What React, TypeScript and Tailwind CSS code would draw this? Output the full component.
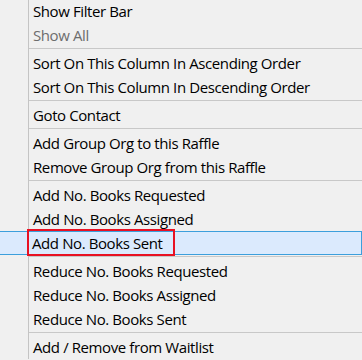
import React from "react";

type Item =
  | { kind: "item"; label: string; disabled?: boolean; selected?: boolean }
  | { kind: "sep" };

const items: Item[] = [
  { kind: "item", label: "Show Filter Bar" },
  { kind: "item", label: "Show All", disabled: true },
  { kind: "sep" },
  { kind: "item", label: "Sort On This Column In Ascending Order" },
  { kind: "item", label: "Sort On This Column In Descending Order" },
  { kind: "sep" },
  { kind: "item", label: "Goto Contact" },
  { kind: "sep" },
  { kind: "item", label: "Add Group Org to this Raffle" },
  { kind: "item", label: "Remove Group Org from this Raffle" },
  { kind: "sep" },
  { kind: "item", label: "Add No. Books Requested" },
  { kind: "item", label: "Add No. Books Assigned" },
  { kind: "item", label: "Add No. Books Sent", selected: true },
  { kind: "sep" },
  { kind: "item", label: "Reduce No. Books Requested" },
  { kind: "item", label: "Reduce No. Books Assigned" },
  { kind: "item", label: "Reduce No. Books Sent" },
  { kind: "sep" },
  { kind: "item", label: "Add / Remove from Waitlist" },
];

export default function App() {
  return (
    <div
      className="w-[362px] h-[360px] overflow-hidden bg-[#f0f0f0] text-black"
      style={{ fontFamily: '"Open Sans", "Noto Sans", sans-serif' }}
    >
      <div className="flex flex-col -mt-[1px]">
        {items.map((it, i) => {
          if (it.kind === "sep") {
            return (
              <div key={i} className="flex h-[4px]">
                <div className="w-[29px] shrink-0 border-r border-[#c4c4c4]" />
                <div className="flex-1 pt-[1px]">
                  <div className="h-[1px] bg-[#c8c8c8]" />
                </div>
              </div>
            );
          }
          if (it.selected) {
            return (
              <div
                key={i}
                className="relative flex h-[24px] -ml-[2px] border border-[#3c9fdc] bg-[#dbeafd]"
              >
                <div className="w-[30px] shrink-0" />
                <div className="flex-1 flex items-center pl-[3px] text-[15px] leading-none tracking-[-0.4px]">
                  {it.label}
                </div>
                <div className="absolute left-[28px] top-[-3px] bottom-[-2px] w-[148px] border-2 border-[#e81123]" />
              </div>
            );
          }
          return (
            <div key={i} className="flex h-[24px]">
              <div className="w-[29px] shrink-0 border-r border-[#c4c4c4]" />
              <div
                className={
                  "flex-1 flex items-center pl-[4px] text-[15px] leading-none tracking-[-0.4px] " +
                  (it.disabled ? "text-[#6d6d6d]" : "text-black")
                }
              >
                {it.label}
              </div>
            </div>
          );
        })}
      </div>
    </div>
  );
}
